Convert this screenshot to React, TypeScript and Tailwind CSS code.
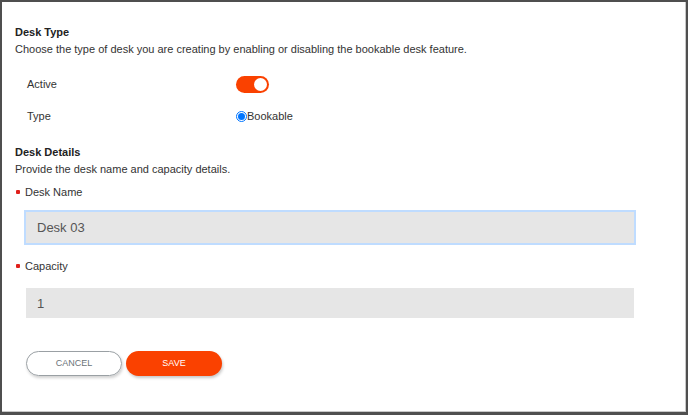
import { useState } from "react";

export default function App() {
	const [active, setActive] = useState(true);
	const [name, setName] = useState("Desk 03");
	const [capacity, setCapacity] = useState("1");

	return (
		<div className="w-[688px] h-[415px] bg-[#4f4f4f] pt-[2px] pl-[2px] pr-[2px] pb-[3px] font-['Liberation_Sans',Arial,sans-serif] text-[#333]">
			<div className="h-full bg-white border-r border-b border-[#c8c8c8] pl-[13px] pt-[22px]">
				{/* Desk type section */}
				<h2 className="text-[11px] font-bold leading-[16px] text-[#222]">Desk Type</h2>
				<p className="text-[11px] leading-[16px] mt-[1px]">
					Choose the type of desk you are creating by enabling or disabling the bookable desk feature.
				</p>

				<div className="mt-[17px] pl-[12px]">
					<div className="flex items-center h-[20px]">
						<span className="w-[209px] text-[11px]">Active</span>
						<button
							onClick={() => setActive(!active)}
							className={`relative w-[33px] h-[17px] rounded-full ${active ? "bg-[#fa4100]" : "bg-gray-300"}`}
						>
							<span
								className={`absolute top-[2px] w-[13px] h-[13px] rounded-full bg-white ${active ? "right-[2px]" : "left-[2px]"}`}
							/>
						</button>
					</div>
					<div className="flex items-center h-[20px] mt-[12px]">
						<span className="w-[209px] text-[11px]">Type</span>
						<label className="flex items-center text-[11px]">
							<span className="w-[11px] h-[11px] rounded-full border border-[#0075ff] flex items-center justify-center">
								<span className="w-[7px] h-[7px] rounded-full bg-[#0075ff]" />
							</span>
							Bookable
						</label>
					</div>
				</div>

				{/* Desk details section */}
				<h2 className="text-[11px] font-bold leading-[16px] text-[#222] mt-[18px]">Desk Details</h2>
				<p className="text-[11px] leading-[16px] mt-[1px]">Provide the desk name and capacity details.</p>

				<div className="flex items-center mt-[7px] text-[11px] h-[16px]">
					<span className="w-[4px] h-[4px] rounded-[1px] bg-[#e0201b] ml-[1px] mr-[5px]" />
					<span>Desk Name</span>
				</div>
				<input
					value={name}
					onChange={(e) => setName(e.target.value)}
					className="block mt-[10px] ml-[9px] w-[612px] h-[35px] bg-[#e6e6e6] border-2 border-[#bfdcff] px-[11px] text-[13px] text-[#555] outline-none"
				/>

				<div className="flex items-center mt-[13px] text-[11px] h-[16px]">
					<span className="w-[4px] h-[4px] rounded-[1px] bg-[#e0201b] ml-[1px] mr-[5px]" />
					<span>Capacity</span>
				</div>
				<input
					value={capacity}
					onChange={(e) => setCapacity(e.target.value)}
					className="block mt-[14px] ml-[11px] w-[608px] h-[30px] bg-[#e6e6e6] px-[11px] text-[13px] text-[#555] outline-none"
				/>

				<div className="flex gap-[4px] mt-[33px] ml-[11px]">
					<button className="w-[96px] h-[25px] rounded-full border border-[#9aa0a4] text-[9px] text-[#6b7378] shadow-[1px_2px_3px_rgba(0,0,0,0.18)]">
						CANCEL
					</button>
					<button className="w-[96px] h-[25px] rounded-full bg-[#fa4100] text-[9px] text-white shadow-[1px_2px_3px_rgba(0,0,0,0.22)]">
						SAVE
					</button>
				</div>
			</div>
		</div>
	);
}
